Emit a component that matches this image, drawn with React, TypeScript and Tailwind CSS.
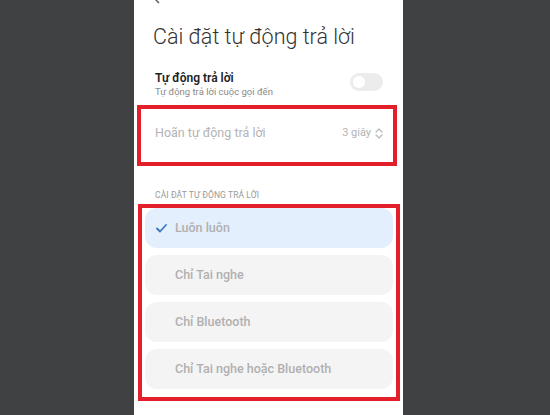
import React from 'react'

const options = [
  { label: 'Luôn luôn', active: true },
  { label: 'Chỉ Tai nghe', active: false },
  { label: 'Chỉ Bluetooth', active: false },
  { label: 'Chỉ Tai nghe hoặc Bluetooth', active: false },
]

const UpDown: React.FC = () => (
  <svg width="8" height="11" viewBox="0 0 8 11" fill="none" stroke="#b8b8b8" strokeWidth="1.2" strokeLinecap="round" strokeLinejoin="round">
    <path d="M1 4 L4 1 L7 4" />
    <path d="M1 7 L4 10 L7 7" />
  </svg>
)

export default function App() {
  return (
    <div className="flex h-[415px] w-[550px] overflow-hidden bg-[#404142] pl-[134px] font-['Roboto',sans-serif]">
      <div className="flex w-[269px] flex-col bg-white">
        {/* back arrow, cut off at the top */}
        <div className="ml-[18px] mt-[-6px] h-[10px]">
          <svg width="10" height="10" viewBox="0 0 10 10" fill="none" stroke="#555" strokeWidth="1.4">
            <path d="M7 1 L3 5 L7 9" />
          </svg>
        </div>

        <h1 className="ml-[19px] mt-[21px] text-[21.5px] font-light leading-[24px] text-[#333]">
          Cài đặt tự động trả lời
        </h1>

        <div className="mt-[22px] flex items-center justify-between pl-[21px] pr-[20px]">
          <div>
            <div className="text-[12px] font-semibold leading-[15px] text-[#222]">Tự động trả lời</div>
            <div className="text-[9.5px] leading-[12px] text-[#8a8a8a]">Tự động trả lời cuộc gọi đến</div>
          </div>
          <div className="mt-[-6px] flex h-[18px] w-[33px] items-center rounded-full bg-[#ececec] px-[3px]">
            <div className="h-[12px] w-[12px] rounded-full bg-white" />
          </div>
        </div>

        {/* delay row */}
        <div className="ml-[3px] mt-[7px] flex h-[61px] w-[260px] items-center justify-between border-4 border-[#e3202a] pb-[4px] pl-[14px] pr-[10px]">
          <span className="text-[12.5px] text-[#b3b3b3]">Hoãn tự động trả lời</span>
          <span className="flex items-center gap-[4px] text-[11px] text-[#b3b3b3]">
            3 giây <UpDown />
          </span>
        </div>

        <div className="ml-[21px] mt-[24px] text-[8.5px] leading-[10px] tracking-[0.1px] text-[#9a9a9a]">
          CÀI ĐẶT TỰ ĐỘNG TRẢ LỜI
        </div>

        {/* options */}
        <div className="ml-[4px] mt-[4px] flex w-[262px] flex-col gap-[7px] border-4 border-[#e3202a] px-[3px] pb-[8px]">
          {options.map((o) => (
            <div
              key={o.label}
              className={`flex h-[40px] items-center rounded-[12px] ${o.active ? 'bg-[#e3effd]' : 'bg-[#f4f4f4]'}`}
            >
              <div className="flex w-[30px] justify-center pl-[3px]">
                {o.active && (
                  <svg width="11" height="9" viewBox="0 0 11 9" fill="none" stroke="#3a78c2" strokeWidth="1.8" strokeLinecap="round" strokeLinejoin="round">
                    <path d="M1 4.5 L4 7.5 L10 1" />
                  </svg>
                )}
              </div>
              <span className="text-[12.5px] font-medium text-[#b0b0b0]">{o.label}</span>
            </div>
          ))}
        </div>
      </div>
    </div>
  )
}
